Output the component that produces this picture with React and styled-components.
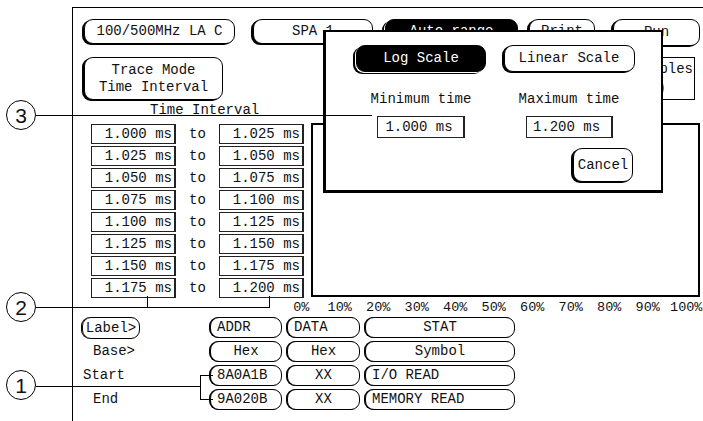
import React from "react";
import styled, { createGlobalStyle } from "styled-components";

const Global = createGlobalStyle`
  html, body { margin: 0; padding: 0; background: #fff; }
  body { font-family: "Liberation Mono", "DejaVu Sans Mono", monospace; font-size: 14px; color: #111; }
  * { box-sizing: border-box; }
`;

const Canvas = styled.div`
  position: relative;
  width: 703px;
  height: 421px;
  overflow: hidden;
  background: #fff;
`;

const Screen = styled.div`
  margin-left: 72px;
  margin-top: 7px;
  height: 414px;
  border-top: 1px solid #000;
  border-left: 1px solid #000;
  display: flex;
  flex-direction: column;
`;

const TopBar = styled.div`
  display: flex;
  margin-top: 11px;
  height: 25px;
`;

const Key = styled.div`
  flex: none;
  width: ${(p) => p.$w}px;
  height: ${(p) => p.$h || 25}px;
  margin-left: ${(p) => p.$ml || 0}px;
  border: 1px solid #000;
  border-radius: 9px;
  background: ${(p) => (p.$dark ? "#000" : "#fff")};
  color: ${(p) => (p.$dark ? "#fff" : "#111")};
  box-shadow: ${(p) =>
    p.$dark ? "-1px 1px 0 #fff, -3px 2px 0 #000" : "-2px 1px 0 #000"};
  display: flex;
  flex-direction: column;
  align-items: center;
  justify-content: center;
  line-height: 17px;
  white-space: pre;
`;

const SecondRow = styled.div`
  display: flex;
  justify-content: space-between;
  margin-top: 13px;
  height: 43px;
`;

const InfoBox = styled.div`
  width: 90px;
  height: 43px;
  margin-right: 8px;
  border: 1px solid #000;
  display: flex;
  flex-direction: column;
  justify-content: center;
  line-height: 19px;
  text-align: right;
`;

const InfoLine = styled.div`
  padding-right: ${(p) => p.$pr}px;
`;

const SectionTitle = styled.div`
  height: 23px;
  padding-top: 3px;
  padding-left: 77px;
  line-height: 14px;
`;

const Middle = styled.div`
  display: flex;
  align-items: flex-start;
  height: 174px;
`;

const IntervalList = styled.div`
  margin-left: 18px;
  padding-top: 1px;
  display: flex;
  flex-direction: column;
  gap: 2px;
`;

const IntervalRow = styled.div`
  display: flex;
  align-items: center;
  height: 20px;
`;

const ValueBox = styled.div`
  width: ${(p) => p.$w || 85}px;
  height: ${(p) => p.$h || 20}px;
  border: 1px solid #222;
  border-right-width: 2px;
  text-align: right;
  padding-right: 2px;
  line-height: ${(p) => (p.$h ? p.$h - 2 : 18)}px;
  white-space: pre;
  background: #fff;
`;

const ToLabel = styled.div`
  width: 43px;
  text-align: center;
  line-height: 18px;
`;

const Graph = styled.div`
  margin-left: 7px;
  width: 389px;
  height: 174px;
  border: 2px solid #000;
`;

const PercentRow = styled.div`
  display: flex;
  height: 20px;
  padding-top: 4px;
  margin-left: 209px;
`;

const Pct = styled.div`
  flex: none;
  width: 38.5px;
  text-align: center;
  line-height: 14px;
  font-size: 13.5px;
  white-space: nowrap;
`;

const BottomGrid = styled.div`
  display: grid;
  grid-template-columns: 123px 72px 73px 150px;
  grid-auto-rows: 21px;
  column-gap: 5px;
  row-gap: 3px;
  margin-left: 9px;
`;

const Field = styled.div`
  border: 1px solid #000;
  border-radius: 9px;
  box-shadow: -1px 0 0 #000;
  display: flex;
  align-items: center;
  justify-content: ${(p) => (p.$left ? "flex-start" : "center")};
  padding-left: ${(p) => (p.$left ? 6 : 0)}px;
  line-height: 19px;
  white-space: pre;
  background: #fff;
`;

const RowLabel = styled.div`
  padding-left: ${(p) => p.$pl}px;
  line-height: 21px;
`;

const LabelKey = styled.div`
  width: 58px;
  height: 22px;
  border: 1px solid #000;
  border-radius: 9px;
  box-shadow: -1px 0 0 #000;
  display: flex;
  align-items: center;
  justify-content: center;
`;

const Dialog = styled.div`
  position: absolute;
  left: 323px;
  top: 30px;
  width: 340px;
  height: 163px;
  background: #fff;
  border: 2px solid #000;
  border-left-width: 3px;
  border-bottom-width: 3px;
  padding: 13px 0 0 21px;
  display: grid;
  grid-template-columns: 148px 148px;
  grid-auto-rows: auto;
  align-content: start;
  align-items: start;
  justify-items: center;
`;

const DialogLabel = styled.div`
  margin-top: 20px;
  line-height: 14px;
`;

const DialogCell = styled.div`
  margin-top: ${(p) => p.$mt || 0}px;
  justify-self: ${(p) => p.$self || "center"};
  margin-right: ${(p) => p.$mr || 0}px;
`;

const Callout = styled.div`
  position: absolute;
  left: ${(p) => p.$x - 15}px;
  top: ${(p) => p.$y - 15}px;
  width: 30px;
  height: 30px;
  border: 1px solid #000;
  border-radius: 50%;
  background: #fff;
  display: flex;
  align-items: center;
  justify-content: center;
  font-family: "Liberation Sans", Arial, sans-serif;
  font-size: 21px;
  line-height: 1;
`;

const Leaders = styled.svg`
  position: absolute;
  left: 0;
  top: 0;
  pointer-events: none;
`;

const intervals = [
  ["1.000", "1.025"],
  ["1.025", "1.050"],
  ["1.050", "1.075"],
  ["1.075", "1.100"],
  ["1.100", "1.125"],
  ["1.125", "1.150"],
  ["1.150", "1.175"],
  ["1.175", "1.200"],
];

const pcts = ["0%", "10%", "20%", "30%", "40%", "50%", "60%", "70%", "80%", "90%", "100%"];

export default function App() {
  return (
    <>
      <Global />
      <Canvas>
        <Screen>
          <TopBar>
            <Key $w={151} $ml={11}>100/500MHz LA C</Key>
            <Key $w={120} $ml={18}>SPA 1</Key>
            <Key $w={133} $ml={12} $dark>Auto range</Key>
            <Key $w={66} $ml={11}>Print</Key>
            <Key $w={87} $ml={18} $h={27}>Run</Key>
          </TopBar>
          <SecondRow>
            <Key $w={139} $h={43} $ml={11}>
              <span>Trace Mode</span>
              <span>Time Interval</span>
            </Key>
            <InfoBox>
              <InfoLine $pr={1}>Samples</InfoLine>
              <InfoLine $pr={28}>(1000)</InfoLine>
            </InfoBox>
          </SecondRow>
          <SectionTitle>Time Interval</SectionTitle>
          <Middle>
            <IntervalList>
              {intervals.map(([a, b]) => (
                <IntervalRow key={a}>
                  <ValueBox>{a} ms</ValueBox>
                  <ToLabel>to</ToLabel>
                  <ValueBox>{b} ms</ValueBox>
                </IntervalRow>
              ))}
            </IntervalList>
            <Graph />
          </Middle>
          <PercentRow>
            {pcts.map((p) => (
              <Pct key={p}>{p}</Pct>
            ))}
          </PercentRow>
          <BottomGrid>
            <LabelKey>Label&gt;</LabelKey>
            <Field $left>ADDR</Field>
            <Field $left>DATA</Field>
            <Field>STAT</Field>

            <RowLabel $pl={11}>Base&gt;</RowLabel>
            <Field>Hex</Field>
            <Field>Hex</Field>
            <Field>Symbol</Field>

            <RowLabel $pl={1}>Start</RowLabel>
            <Field $left>8A0A1B</Field>
            <Field>XX</Field>
            <Field $left>I/O READ</Field>

            <RowLabel $pl={11}>End</RowLabel>
            <Field $left>9A020B</Field>
            <Field>XX</Field>
            <Field $left>MEMORY READ</Field>
          </BottomGrid>
        </Screen>

        <Dialog>
          <Key $w={130} $h={27} $dark>Log Scale</Key>
          <Key $w={131} $h={27}>Linear Scale</Key>
          <DialogLabel>Minimum time</DialogLabel>
          <DialogLabel>Maximum time</DialogLabel>
          <DialogCell $mt={10}>
            <ValueBox $w={88} $h={22}>1.000 ms </ValueBox>
          </DialogCell>
          <DialogCell $mt={10}>
            <ValueBox $w={87} $h={22}>1.200 ms </ValueBox>
          </DialogCell>
          <span />
          <DialogCell $mt={10} $self="end" $mr={10}>
            <Key $w={60} $h={34}>Cancel</Key>
          </DialogCell>
        </Dialog>

        <Leaders width="703" height="421" viewBox="0 0 703 421">
          <g stroke="#000" strokeWidth="1" fill="none" shapeRendering="crispEdges">
            <line x1="36" y1="115.5" x2="372" y2="115.5" />
            <line x1="36" y1="307.5" x2="270" y2="307.5" />
            <line x1="147.5" y1="296" x2="147.5" y2="308" />
            <line x1="269.5" y1="296" x2="269.5" y2="308" />
            <line x1="36" y1="386.5" x2="200" y2="386.5" />
            <line x1="200.5" y1="375" x2="200.5" y2="400" />
            <line x1="200" y1="375.5" x2="213" y2="375.5" />
            <line x1="200" y1="399.5" x2="213" y2="399.5" />
          </g>
        </Leaders>
        <Callout $x={21} $y={115}>3</Callout>
        <Callout $x={21} $y={307}>2</Callout>
        <Callout $x={21} $y={385}>1</Callout>
      </Canvas>
    </>
  );
}
